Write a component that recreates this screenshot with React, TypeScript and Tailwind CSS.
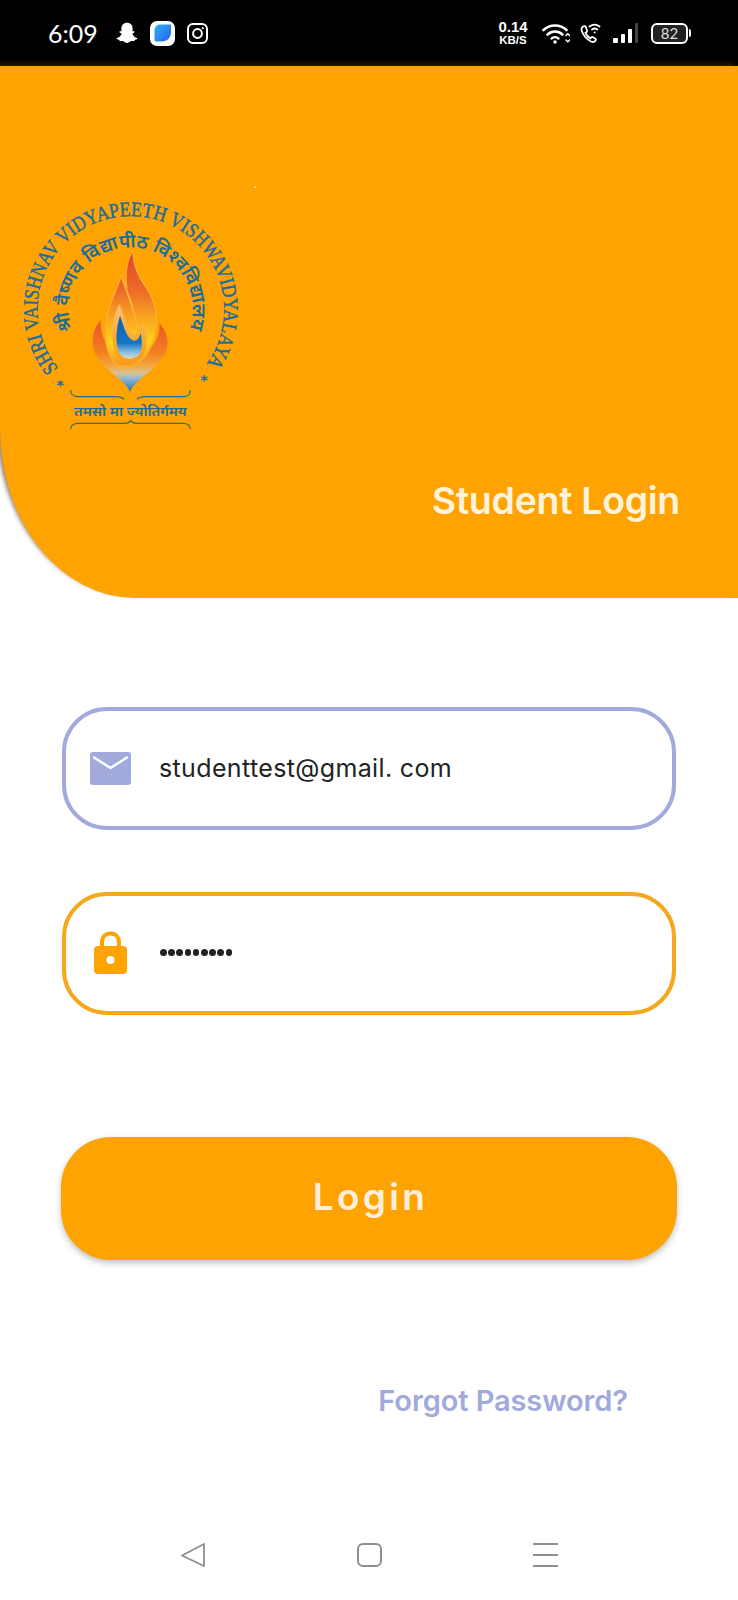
import React from "react";

const BLUE = "#1b6b9b";

function Flame() {
  return (
    <g transform="translate(240 210)">
      <path
        d="M150 455 C135 420 90 400 62 365 C30 330 30 280 62 240 C60 270 70 300 85 320 L215 320 C235 300 240 275 238 250 C270 285 272 330 240 365 C210 400 165 420 150 455 Z"
        fill="url(#base)"
      />
      <path
        d="M110 378 C85 350 70 310 78 250 C85 190 110 150 125 105 C130 130 135 135 140 140 C135 100 140 60 160 28 C155 70 175 110 200 145 C225 180 240 240 220 300 C205 345 180 372 150 378 Z"
        fill="url(#main)"
        stroke="#fdb02e"
        strokeWidth="4"
      />
      <path d="M128 118 C142 160 158 190 172 262" fill="none" stroke="#fbb03a" strokeWidth="6" strokeLinecap="round" />
      <path
        d="M118 192 C90 240 92 320 115 352 C130 372 175 372 192 340 C205 310 200 275 190 245 C182 272 170 285 160 285 C140 270 135 230 118 192 Z"
        fill="url(#halo)"
      />
      <path
        d="M120 228 C108 265 104 310 120 342 C132 362 168 362 180 340 C188 322 186 300 182 280 C178 295 170 305 160 302 C140 295 132 260 120 228 Z"
        fill="url(#blue)"
      />
    </g>
  );
}

function Logo() {
  return (
    <svg width="270" height="270" viewBox="0 0 810 810" className="block">
      <defs>
        <linearGradient id="base" x1="0" y1="240" x2="0" y2="455" gradientUnits="userSpaceOnUse">
          <stop offset="0" stopColor="#e8522a" />
          <stop offset="0.45" stopColor="#f4801e" />
          <stop offset="0.64" stopColor="#f5a63c" />
          <stop offset="0.74" stopColor="#d9c290" />
          <stop offset="0.82" stopColor="#8db8d4" />
          <stop offset="1" stopColor="#1f6fb2" />
        </linearGradient>
        <linearGradient id="main" x1="0" y1="28" x2="0" y2="378" gradientUnits="userSpaceOnUse">
          <stop offset="0" stopColor="#e2452a" />
          <stop offset="0.35" stopColor="#ec6a28" />
          <stop offset="0.6" stopColor="#f9a81c" />
          <stop offset="0.8" stopColor="#ffd21c" />
          <stop offset="1" stopColor="#f7961c" />
        </linearGradient>
        <linearGradient id="halo" x1="0" y1="192" x2="0" y2="372" gradientUnits="userSpaceOnUse">
          <stop offset="0" stopColor="#f8c27a" />
          <stop offset="0.6" stopColor="#f9a92c" />
          <stop offset="1" stopColor="#f89a1c" />
        </linearGradient>
        <linearGradient id="blue" x1="0" y1="228" x2="0" y2="358" gradientUnits="userSpaceOnUse">
          <stop offset="0" stopColor="#0f5fb0" />
          <stop offset="0.62" stopColor="#1574c4" />
          <stop offset="0.85" stopColor="#8cc4e6" />
          <stop offset="1" stopColor="#e8d8b0" />
        </linearGradient>
        <path id="arcOuter" d="M 175.400 595.400 A 280 280 0 1 1 620 581" fill="none" />
        <path id="arcInner" d="M 217 481 A 186 186 0 1 1 569 476" fill="none" />
      </defs>
      <text fontFamily="'Liberation Serif', serif" fontSize="62" fill={BLUE} stroke={BLUE} strokeWidth="1.400">
        <textPath href="#arcOuter" textLength="1245" lengthAdjust="spacingAndGlyphs">SHRI VAISHNAV VIDYAPEETH VISHWAVIDYALAYA</textPath>
      </text>
      <text fontFamily="'Noto Sans', 'Noto Sans Devanagari', sans-serif" fontSize="56" fill={BLUE} fontWeight="600">
        <textPath href="#arcInner" textLength="707" lengthAdjust="spacingAndGlyphs">श्री वैष्णव विद्यापीठ विश्वविद्यालय</textPath>
      </text>
      <Flame />
      <text x="180" y="660" textAnchor="middle" fontSize="44" fontWeight="700" fill={BLUE} fontFamily="'DejaVu Sans', sans-serif">*</text>
      <text x="612" y="645" textAnchor="middle" fontSize="44" fontWeight="700" fill={BLUE} fontFamily="'DejaVu Sans', sans-serif">*</text>
      <path d="M212 660 C212 676 220 680 235 680 L345 680 C358 680 366 682 372 688" fill="none" stroke={BLUE} strokeWidth="3.500" />
      <path d="M571 660 C571 676 563 680 548 680 L438 680 C425 680 417 682 411 688" fill="none" stroke={BLUE} strokeWidth="3.500" />
      <text x="391" y="738" textAnchor="middle" fontFamily="'Noto Sans', 'Noto Sans Devanagari', sans-serif" fontWeight="600" fontSize="40" textLength="338" lengthAdjust="spacingAndGlyphs" fill={BLUE}>तमसो मा ज्योतिर्गमय</text>
      <path d="M212 778 C212 764 220 760 235 760 L375 760 C383 760 388 758 392 752 C396 758 401 760 409 760 L548 760 C563 760 571 764 571 778" fill="none" stroke="#3f6a63" strokeWidth="3.500" />
      <circle cx="765" cy="52" r="3" fill="#ffe0a0" />
    </svg>
  );
}

function StatusBar() {
  return (
    <div className="h-[66px] bg-black flex items-center text-white pl-[48px] pr-[47px] font-['Lato',sans-serif]">
      <span className="text-[25px] leading-none w-[48px] font-normal">6:09</span>
      <svg width="24" height="22" viewBox="0 0 24 22" className="ml-[19px]">
        <path fill="#fff" d="M12 0.800c3.600 0 5.600 2.600 5.600 5.600 0 1.200-.100 2.200-.100 2.800.600.400 1.500-.200 2 .300.500.700-.600 1.400-1.600 1.800-.500.200-.400.800-.100 1.400.800 1.600 2.200 2.800 4.300 3.400.600.200.500.800-.100 1.100-.700.300-1.700.400-2.300.700-.300.500-.200 1.300-.800 1.300-.900 0-2-.400-3.200.100-1.200.500-2 1.600-3.700 1.600s-2.500-1.100-3.700-1.600c-1.200-.500-2.300-.100-3.200-.100-.600 0-.500-.800-.800-1.300-.600-.300-1.600-.400-2.300-.700-.600-.300-.700-.900-.100-1.100 2.100-.600 3.500-1.800 4.300-3.400.300-.600.400-1.200-.100-1.400-1-.400-2.100-1.100-1.600-1.800.500-.500 1.400.100 2-.300 0-.600-.100-1.600-.100-2.800 0-3 2-5.600 5.600-5.600z" />
      </svg>
      <div className="ml-[11px] w-[25px] h-[25px] rounded-[7px] bg-white flex items-center justify-center">
        <svg width="20" height="20" viewBox="0 0 20 20">
          <defs>
            <linearGradient id="ap" x1="0" y1="0" x2="1" y2="1">
              <stop offset="0" stopColor="#2fb0f5" />
              <stop offset="1" stopColor="#2a62ea" />
            </linearGradient>
          </defs>
          <path fill="url(#ap)" d="M7 1.500h11v8c0 5-4 9-9 9H3c-1 0-1.500-.600-1.500-1.500V7c0-3 2.500-5.500 5.500-5.500z" />
        </svg>
      </div>
      <svg width="21" height="21" viewBox="0 0 21 21" className="ml-[12px]" fill="none" stroke="#fff" strokeWidth="2">
        <rect x="1" y="1" width="19" height="19" rx="5" />
        <circle cx="10.500" cy="10.500" r="4.400" />
        <circle cx="15.800" cy="5.200" r="0.700" fill="#fff" strokeWidth="1" />
      </svg>
      <div className="ml-auto w-[30px] flex flex-col items-center font-['Liberation_Sans',sans-serif] font-bold leading-none">
        <span className="text-[15px] leading-[14px]">0.14</span>
        <span className="text-[11.500px] leading-[12px]">KB/S</span>
      </div>
      <svg width="28" height="21" viewBox="0 0 28 21" className="ml-[14px]" fill="none" stroke="#fff" strokeWidth="2.600" strokeLinecap="round">
        <path d="M1.500 7C8 1 18 1 24.500 7" />
        <path d="M5.500 11.500C10 7.500 16 7.500 20.500 11.500" />
        <path d="M9.500 15.500C11.500 14 14.500 14 16.500 15.500" strokeWidth="2.200" />
        <circle cx="13" cy="19" r="1.800" fill="#fff" stroke="none" />
        <path d="M24 12.500l1.800-1.800 1.800 1.800M24 17l1.800 1.800 1.800-1.800" strokeWidth="1.500" />
      </svg>
      <svg width="21" height="21" viewBox="0 0 21 21" className="ml-[10px]" fill="none" stroke="#fff" strokeWidth="1.800" strokeLinecap="round">
        <path d="M3 3.500c-1.500 1-2 2.500-1 5 1.500 4 4.500 7.500 9 10 2 1 3.500.400 4.500-.800.700-.900.500-1.500-.200-2l-2.300-1.500c-.700-.400-1.300-.300-1.900.400l-.700.800c-2.400-1.300-4-3.200-5-5.500l1-.600c.700-.500.900-1.100.600-1.800L5.900 4c-.500-1-1.700-1.200-2.900-.500z" />
        <path d="M9.500 3.500c3.200-2.400 7-2.400 10 0M12 6.500c2-1.400 3.500-1.400 5.200 0" />
        <circle cx="14.600" cy="9.500" r="1" fill="#fff" stroke="none" />
      </svg>
      <div className="ml-[12px] flex items-end gap-[3px] h-[21px] pb-[1px]">
        <div className="w-[5px] h-[5px] bg-white rounded-[1px]" />
        <div className="w-[4px] h-[9px] bg-white rounded-[1px]" />
        <div className="w-[4px] h-[14px] bg-white rounded-[1px]" />
        <div className="w-[3px] h-[20px] bg-[#444] rounded-[1px]" />
      </div>
      <div className="ml-[13px] w-[37px] h-[21px] rounded-[6px] border-2 border-white flex items-center justify-center bg-[#222] text-[15px] font-normal leading-none text-[#ddd]">
        82
      </div>
      <div className="ml-[1px] w-[2px] h-[8px] bg-white rounded-r-[2px]" />
    </div>
  );
}

export default function App() {
  return (
    <div className="w-[738px] h-[1600px] bg-white overflow-hidden font-['Inter',sans-serif] flex flex-col">
      <StatusBar />
      <div className="h-[532px] bg-[#ffa303] rounded-bl-[135px_170px] shadow-[-3px_-3px_4px_rgba(70,40,0,0.6)] pt-[104px] relative">
        <Logo />
        <div className="absolute right-[58px] top-[412px] text-[37.500px] leading-[46px] font-semibold tracking-[-0.3px] text-[#fff3dc]">Student Login</div>
      </div>

      <div className="mt-[109px] mx-[62px] h-[123px] rounded-[45px] border-4 border-[#a1aadb] flex items-center pl-[24px]">
        <svg width="41" height="33" viewBox="0 0 41 33">
          <rect width="41" height="33" rx="3" fill="#a1aadb" />
          <path d="M4 5.500 L20.500 16 L37 5.500" fill="none" stroke="#fff" strokeWidth="2.500" strokeLinecap="round" strokeLinejoin="round" />
        </svg>
        <span className="ml-[28px] text-[25px] leading-none tracking-[0.36px] text-[#222] font-normal">studenttest@gmail. com</span>
      </div>

      <div className="mt-[62px] mx-[62px] h-[123px] rounded-[45px] border-4 border-[#f6a81c] flex items-center pl-[28px]">
        <svg width="33" height="43" viewBox="0 0 33 43" className="mb-[2px]">
          <path d="M8 17V11.500C8 6 11.500 2.500 16.500 2.500S25 6 25 11.500V17" fill="none" stroke="#ffa303" strokeWidth="4" />
          <rect y="15" width="33" height="28" rx="4" fill="#ffa303" />
          <circle cx="16.500" cy="29" r="4" fill="#fff" />
        </svg>
        <div className="ml-[33px] flex gap-[1.500px] mb-[2px]">
          {Array.from({ length: 9 }).map((_, i) => (
            <span key={i} className="w-[6.700px] h-[6.700px] rounded-full bg-[#222]" />
          ))}
        </div>
      </div>

      <div className="mt-[122px] mx-[61px] h-[123px] rounded-[50px] bg-[#ffa303] shadow-[0_3px_6px_rgba(0,0,0,0.25)] flex items-center justify-center">
        <span className="text-[37px] leading-none font-semibold tracking-[3.300px] text-[#fff0dc] mb-[4px] ml-[3px]">Login</span>
      </div>

      <div className="mt-[121px] pr-[110px] text-right text-[29px] leading-[40px] font-semibold tracking-[-0.1px] text-[#a1aadb]">Forgot Password?</div>

      <div className="mt-[122px] flex justify-between pl-[181px] pr-[180px]">
        <svg width="24" height="24" viewBox="0 0 24 24" fill="none" stroke="#8e8e8e" strokeWidth="1.800" strokeLinejoin="round">
          <path d="M23 1L1 12.500L23 23Z" />
        </svg>
        <svg width="25" height="24" viewBox="0 0 25 24" fill="none" stroke="#8e8e8e" strokeWidth="2">
          <rect x="1" y="1" width="23" height="22" rx="5" />
        </svg>
        <svg width="25" height="24" viewBox="0 0 25 24" stroke="#8e8e8e" strokeWidth="2">
          <path d="M0 1H25M0 12H25M0 23H25" />
        </svg>
      </div>
    </div>
  );
}
